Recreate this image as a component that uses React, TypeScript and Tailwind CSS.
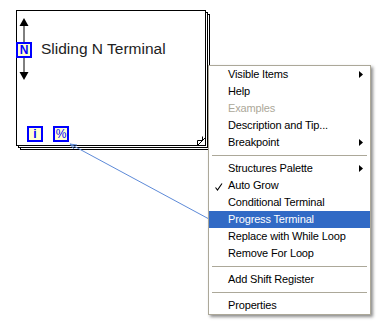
import React from "react";

type Item =
  | { kind: "item"; label: string; sub?: boolean; disabled?: boolean; checked?: boolean; active?: boolean }
  | { kind: "sep" };

const items: Item[] = [
  { kind: "item", label: "Visible Items", sub: true },
  { kind: "item", label: "Help" },
  { kind: "item", label: "Examples", disabled: true },
  { kind: "item", label: "Description and Tip..." },
  { kind: "item", label: "Breakpoint", sub: true },
  { kind: "sep" },
  { kind: "item", label: "Structures Palette", sub: true },
  { kind: "item", label: "Auto Grow", checked: true },
  { kind: "item", label: "Conditional Terminal" },
  { kind: "item", label: "Progress Terminal", active: true },
  { kind: "item", label: "Replace with While Loop" },
  { kind: "item", label: "Remove For Loop" },
  { kind: "sep" },
  { kind: "item", label: "Add Shift Register" },
  { kind: "sep" },
  { kind: "item", label: "Properties" },
];

function Terminal({ children, bold }: { children: React.ReactNode; bold?: boolean }) {
  return (
    <div
      className={
        "w-[16px] h-[16px] border-2 border-[#0000ff] bg-[#ffffd0] flex items-center justify-center text-[#0000ff] leading-none " +
        (bold ? "text-[12px] font-bold" : "text-[12px]")
      }
    >
      {children}
    </div>
  );
}

export default function App() {
  return (
    <div className="relative w-[381px] h-[330px] bg-white overflow-hidden font-['Liberation_Sans',Arial,sans-serif]">
      <div className="pl-[16px] pt-[10px]">
        <div className="relative w-[190px] h-[136px]">
          <div className="absolute left-[4px] top-[4px] w-[190px] h-[136px] border border-black bg-white" />
          <div className="absolute left-[2px] top-[2px] w-[190px] h-[136px] border border-black bg-white" />
          <div className="relative w-[190px] h-[136px] border border-black bg-white flex flex-col">
            {/* sliding N terminal on the left border */}
            <div className="flex items-start">
              <div className="ml-[-1px] mt-[6px] w-[16px] flex flex-col items-center">
                <svg width="16" height="25" viewBox="0 0 16 25" className="block">
                  <polygon points="8,1 3.5,9 12.5,9" fill="#000" />
                  <line x1="8" y1="8" x2="8" y2="25" stroke="#000" strokeWidth="1" />
                </svg>
                <Terminal bold>N</Terminal>
                <svg width="16" height="23" viewBox="0 0 16 23" className="block">
                  <line x1="8" y1="0" x2="8" y2="15" stroke="#000" strokeWidth="1" />
                  <polygon points="8,22 3.5,14 12.5,14" fill="#000" />
                </svg>
              </div>
              <div className="ml-[9px] mt-[30px] text-[15.5px] leading-none text-[#222]">Sliding N Terminal</div>
            </div>
            <div className="mt-auto mb-[3px] ml-[10px] flex gap-[10px]">
              <Terminal bold>i</Terminal>
              <Terminal>%</Terminal>
            </div>
            {/* dog-ear */}
            <svg width="10" height="10" viewBox="0 0 10 10" className="absolute right-[-1px] bottom-[-1px]">
              <path d="M1.5 9.5 V4.5 H6.5 V0.5" fill="none" stroke="#000" strokeWidth="1" />
              <line x1="2" y1="9" x2="9" y2="2" stroke="#000" strokeWidth="1" />
            </svg>
          </div>
        </div>
      </div>

      {/* wire */}
      <svg className="absolute left-0 top-0" width="381" height="330" viewBox="0 0 381 330">
        <line x1="70" y1="144" x2="209" y2="219" stroke="#5d8ad8" strokeWidth="1" />
        <polyline points="77,145 70,144 74,149" fill="none" stroke="#5d8ad8" strokeWidth="1" />
      </svg>

      {/* context menu */}
      <div className="absolute left-[208px] top-[65px] w-[163px] border border-[#aca899] bg-white shadow-[2px_2px_3px_rgba(0,0,0,0.45)] text-[11px] tracking-[-0.15px] text-black">
        {items.map((it, i) =>
          it.kind === "sep" ? (
            <div key={i} className="h-[9px] flex items-center px-[3px]">
              <div className="h-px w-full bg-[#aca899]" />
            </div>
          ) : (
            <div
              key={i}
              className={
                "relative h-[17px] flex items-center pl-[19px] " +
                (it.active ? "bg-[#316ac5] text-white" : it.disabled ? "text-[#aca899]" : "")
              }
            >
              {it.checked && (
                <svg width="8" height="8" viewBox="0 0 8 8" className="absolute left-[6px] top-[6px]">
                  <path d="M0.5 4.5 L2.5 7 L7 0.5" fill="none" stroke="#000" strokeWidth="1.1" />
                </svg>
              )}
              <span>{it.label}</span>
              {it.sub && (
                <svg width="4" height="7" viewBox="0 0 4 7" className="absolute right-[7px] top-[5px]">
                  <polygon points="0,0 4,3.5 0,7" fill="#000" />
                </svg>
              )}
            </div>
          )
        )}
      </div>
    </div>
  );
}
